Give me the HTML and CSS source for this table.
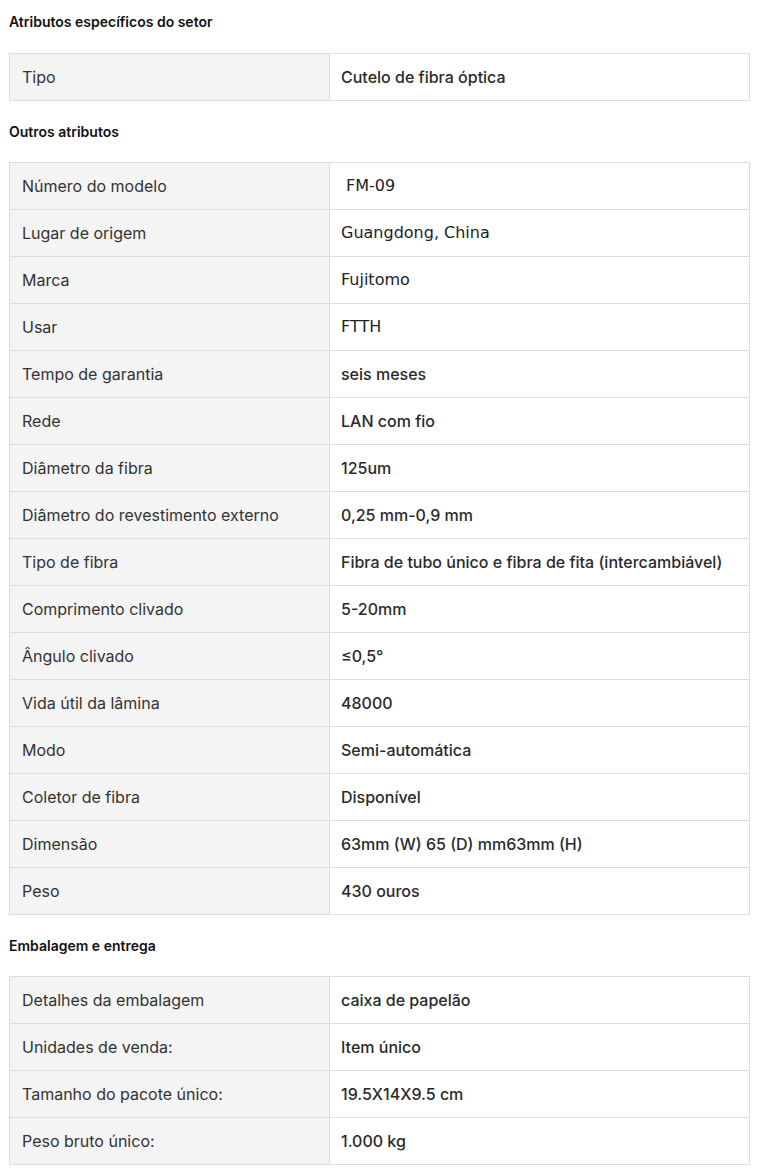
FILE: index.html
```html
<!DOCTYPE html>
<html lang="pt">
<head>
<meta charset="utf-8">
<link rel="stylesheet" href="styles.css">
</head>
<body>
<div class="page">
  <section class="section">
    <h3 class="title">Atributos específicos do setor</h3>
    <div class="table">
      <div class="row"><div class="key">Tipo</div><div class="val">Cutelo de fibra óptica</div></div>
    </div>
  </section>
  <section class="section">
    <h3 class="title">Outros atributos</h3>
    <div class="table">
      <div class="row"><div class="key">Número do modelo</div><div class="val alt">&nbsp;FM-09</div></div>
      <div class="row"><div class="key">Lugar de origem</div><div class="val alt">Guangdong, China</div></div>
      <div class="row"><div class="key">Marca</div><div class="val alt">Fujitomo</div></div>
      <div class="row"><div class="key">Usar</div><div class="val alt">FTTH</div></div>
      <div class="row"><div class="key">Tempo de garantia</div><div class="val">seis meses</div></div>
      <div class="row"><div class="key">Rede</div><div class="val">LAN com fio</div></div>
      <div class="row"><div class="key">Diâmetro da fibra</div><div class="val">125um</div></div>
      <div class="row"><div class="key">Diâmetro do revestimento externo</div><div class="val">0,25 mm-0,9 mm</div></div>
      <div class="row"><div class="key">Tipo de fibra</div><div class="val">Fibra de tubo único e fibra de fita (intercambiável)</div></div>
      <div class="row"><div class="key">Comprimento clivado</div><div class="val">5-20mm</div></div>
      <div class="row"><div class="key">Ângulo clivado</div><div class="val">≤0,5°</div></div>
      <div class="row"><div class="key">Vida útil da lâmina</div><div class="val">48000</div></div>
      <div class="row"><div class="key">Modo</div><div class="val">Semi-automática</div></div>
      <div class="row"><div class="key">Coletor de fibra</div><div class="val">Disponível</div></div>
      <div class="row"><div class="key">Dimensão</div><div class="val">63mm (W) 65 (D) mm63mm (H)</div></div>
      <div class="row"><div class="key">Peso</div><div class="val">430 ouros</div></div>
    </div>
  </section>
  <section class="section">
    <h3 class="title">Embalagem e entrega</h3>
    <div class="table">
      <div class="row"><div class="key">Detalhes da embalagem</div><div class="val">caixa de papelão</div></div>
      <div class="row"><div class="key">Unidades de venda:</div><div class="val">Item único</div></div>
      <div class="row"><div class="key">Tamanho do pacote único:</div><div class="val">19.5X14X9.5 cm</div></div>
      <div class="row"><div class="key">Peso bruto único:</div><div class="val">1.000 kg</div></div>
    </div>
  </section>
</div>
</body>
</html>
```

FILE: styles.css
```css
* { box-sizing: border-box; }
html, body { margin: 0; padding: 0; background: #fff; }
body { font-family: Inter, "Liberation Sans", sans-serif; color: #333; }
.page { padding: 0 9px 0 9px; width: 759px; }
.section + .section { margin-top: 8px; }
.title {
  margin: 0;
  padding: 12px 0 21px 0;
  font-size: 14px;
  line-height: 20px;
  font-weight: 600;
  color: #111;
}
.section + .section .title { padding-top: 13px; padding-bottom: 20px; }
.table {
  border: 1px solid #dddddd;
  border-bottom: 0;
  width: 741px;
}
.row {
  display: grid;
  grid-template-columns: 320px 1fr;
  border-bottom: 1px solid #dddddd;
  min-height: 47px;
}
.key {
  background: #f4f4f4;
  border-right: 1px solid #dddddd;
  padding: 0 12px;
  display: flex;
  align-items: center;
  font-size: 16px;
  line-height: 22px;
  color: #333;
}
.val {
  padding: 0 11px;
  display: flex;
  align-items: center;
  font-size: 16px;
  line-height: 22px;
  font-weight: 500;
  color: #2a2a2a;
}
.val.alt {
  font-family: "DejaVu Sans", "Noto Sans", sans-serif;
  font-weight: 400;
  color: #222;
}
```
